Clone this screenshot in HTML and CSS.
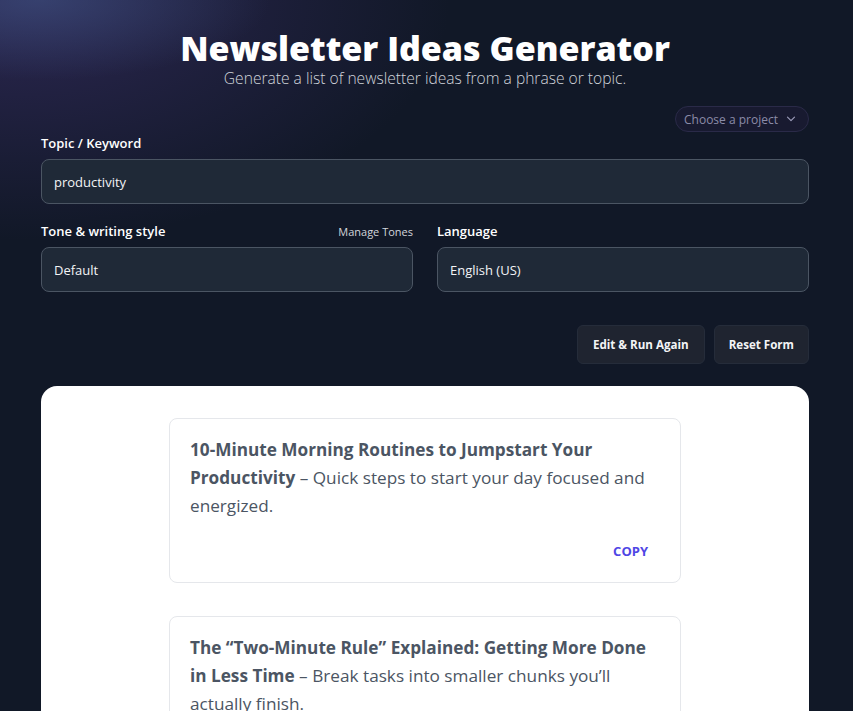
FILE: index.html
```html
<!DOCTYPE html>
<html lang="en">
<head>
<meta charset="utf-8">
<title>Newsletter Ideas Generator</title>
<link rel="stylesheet" href="styles.css">
</head>
<body>
<div class="glow"></div>
<main class="wrap">
  <header class="hero">
    <h1 class="hero-title">Newsletter Ideas Generator</h1>
    <p class="hero-sub">Generate a list of newsletter ideas from a phrase or topic.</p>
  </header>

  <div class="project-row">
    <button class="project-pill" type="button">
      Choose a project
      <svg class="chev" width="10" height="10" viewBox="0 0 10 10" aria-hidden="true"><path d="M1.5 3.2 5 6.7 8.5 3.2" fill="none" stroke="currentColor" stroke-width="1.2" stroke-linecap="round" stroke-linejoin="round"/></svg>
    </button>
  </div>

  <form class="form">
    <div class="field">
      <label class="label">Topic / Keyword</label>
      <div class="input">productivity</div>
    </div>

    <div class="grid2">
      <div class="field">
        <div class="label-row">
          <label class="label">Tone &amp; writing style</label>
          <a class="manage">Manage Tones</a>
        </div>
        <div class="input">Default</div>
      </div>
      <div class="field">
        <div class="label-row">
          <label class="label">Language</label>
        </div>
        <div class="input">English (US)</div>
      </div>
    </div>

    <div class="actions">
      <button class="btn" type="button">Edit &amp; Run Again</button>
      <button class="btn" type="button">Reset Form</button>
    </div>
  </form>

  <section class="results">
    <article class="idea">
      <p class="idea-text"><strong>10-Minute Morning Routines to Jumpstart Your Productivity</strong> – Quick steps to start your day focused and energized.</p>
      <div class="idea-foot"><button class="copy" type="button">COPY</button></div>
    </article>
    <article class="idea">
      <p class="idea-text"><strong>The “Two-Minute Rule” Explained: Getting More Done in Less Time</strong> – Break tasks into smaller chunks you’ll actually finish.</p>
      <div class="idea-foot"><button class="copy" type="button">COPY</button></div>
    </article>
  </section>
</main>
</body>
</html>
```

FILE: styles.css
```css
html, body {
  margin: 0;
  padding: 0;
  height: 100%;
  overflow: hidden;
}

body {
  background: #111827;
  color: #f9fafb;
  font-family: "Open Sans", "Noto Sans", sans-serif;
  position: relative;
  padding: 0 44px 0 41px;
}

/* soft violet haze in the top-left corner */
.glow {
  position: absolute;
  left: 0;
  top: 0;
  width: 620px;
  height: 380px;
  background:
    radial-gradient(ellipse 230px 80px at 40px 0px, rgba(62, 82, 130, 0.6), rgba(62, 82, 130, 0) 100%),
    radial-gradient(ellipse 430px 240px at 20px 0px, rgba(55, 45, 100, 0.7), rgba(55, 45, 100, 0) 100%);
  pointer-events: none;
}

.wrap {
  position: relative;
  max-width: 768px;
}

.hero {
  text-align: center;
  padding-top: 28px;
}

.hero-title {
  margin: 0;
  font-family: "Open Sans", sans-serif;
  font-weight: 800;
  font-size: 34px;
  line-height: 40px;
  color: #ffffff;
}

.hero-sub {
  margin: 0;
  font-size: 15.6px;
  font-weight: 300;
  line-height: 20px;
  color: #d1d5db;
}

.project-row {
  display: flex;
  justify-content: flex-end;
  margin-top: 18px;
}

.project-pill {
  display: flex;
  align-items: center;
  gap: 8px;
  height: 26px;
  padding: 0 12px 0 8px;
  border-radius: 13px;
  border: 1px solid #2a2a48;
  background: #181a30;
  color: #8b8ba8;
  font-family: inherit;
  font-size: 12px;
}

.chev { color: #9a9ab8; }

.field {
  display: flex;
  flex-direction: column;
}

.label-row {
  display: flex;
  justify-content: space-between;
  align-items: center;
}

.label {
  font-size: 13px;
  font-weight: 600;
  line-height: 22px;
  color: #ffffff;
  margin-bottom: 5px;
}

.manage {
  font-size: 11px;
  color: #d1d5db;
  margin-bottom: 5px;
}

.input {
  height: 45px;
  box-sizing: border-box;
  border: 1px solid #4b5563;
  border-radius: 8px;
  background: #1f2937;
  color: #f3f4f6;
  font-size: 13px;
  display: flex;
  align-items: center;
  padding: 0 12px;
}

.grid2 {
  display: grid;
  grid-template-columns: 1fr 1fr;
  gap: 24px;
  margin-top: 16px;
}

.actions {
  display: flex;
  justify-content: flex-end;
  gap: 9px;
  margin-top: 33px;
}

.btn {
  height: 39px;
  padding: 0 15px;
  border-radius: 6px;
  border: 1px solid #252c3a;
  background: #1f2430;
  color: #f3f4f6;
  font-family: inherit;
  font-size: 11.6px;
  font-weight: 700;
}

.btn + .btn { padding: 0 14px; }

.results {
  margin-top: 22px;
  background: #ffffff;
  border-radius: 16px;
  padding: 32px 0 60px;
  display: flex;
  flex-direction: column;
  align-items: center;
  gap: 33px;
  min-height: 400px;
}

.idea {
  width: 512px;
  box-sizing: border-box;
  border: 1px solid #e5e7eb;
  border-radius: 8px;
  padding: 17px 32px 21px 20px;
}

.idea-text {
  margin: 0;
  font-size: 17.2px;
  line-height: 28px;
  color: #4b5563;
}

.idea-text strong {
  font-weight: 700;
  color: #4b5563;
}

.idea-foot {
  display: flex;
  justify-content: flex-end;
  margin-top: 21px;
}

.copy {
  border: 0;
  background: none;
  padding: 0;
  font-family: inherit;
  font-size: 13px;
  font-weight: 700;
  line-height: 20px;
  color: #4f46e5;
}
```
